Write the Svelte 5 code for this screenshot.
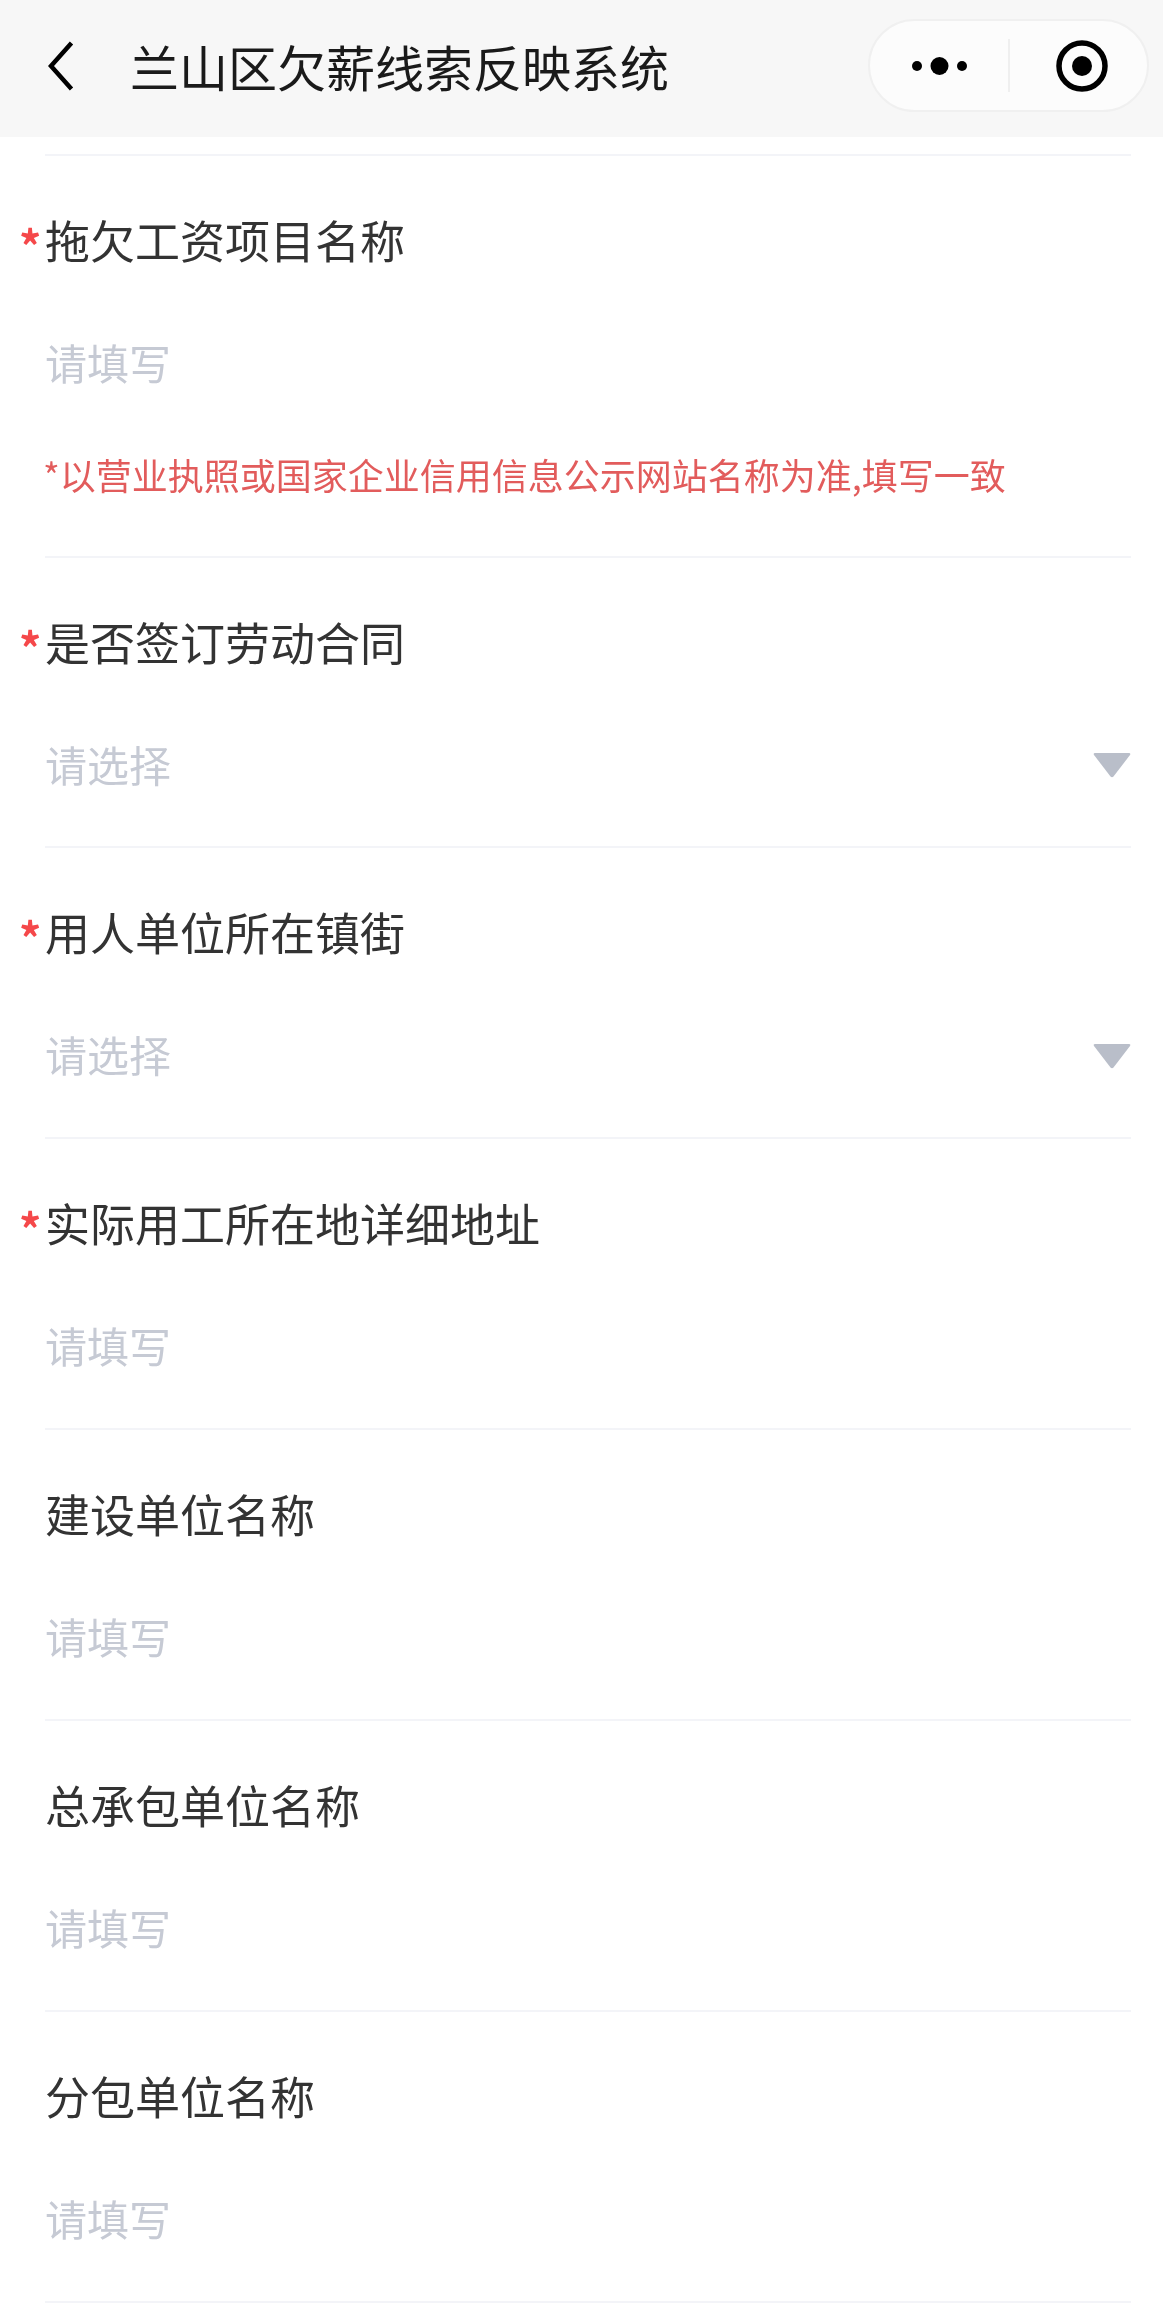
<script>
  // Form rows in display order
  const fields = [
    { label: '拖欠工资项目名称', required: true, placeholder: '请填写', hint: '*以营业执照或国家企业信用信息公示网站名称为准,填写一致' },
    { label: '是否签订劳动合同', required: true, placeholder: '请选择', select: true },
    { label: '用人单位所在镇街', required: true, placeholder: '请选择', select: true },
    { label: '实际用工所在地详细地址', required: true, placeholder: '请填写' },
    { label: '建设单位名称', placeholder: '请填写' },
    { label: '总承包单位名称', placeholder: '请填写' },
    { label: '分包单位名称', placeholder: '请填写' }
  ];
</script>

<div class="page">
  <header class="navbar">
    <svg class="back" width="26" height="50" viewBox="0 0 26 50" aria-hidden="true">
      <path d="M23.5 2 L3 25 L23.5 48" fill="none" stroke="#000" stroke-width="4.5" />
    </svg>
    <h1 class="title">兰山区欠薪线索反映系统</h1>
    <div class="capsule">
      <div class="capsule-part more">
        <svg width="56" height="20" viewBox="0 0 56 20" aria-hidden="true">
          <circle cx="6" cy="10" r="5" />
          <circle cx="28.5" cy="10" r="9" />
          <circle cx="51" cy="10" r="5" />
        </svg>
      </div>
      <div class="capsule-part close">
        <svg width="54" height="54" viewBox="0 0 54 54" aria-hidden="true">
          <circle cx="27" cy="27" r="23" fill="none" stroke="#000" stroke-width="5.5" />
          <circle cx="27" cy="27" r="10" />
        </svg>
      </div>
    </div>
  </header>

  <main class="form">
    <div class="top-rule"></div>
    {#each fields as field}
      <section class="field" class:has-hint={field.hint}>
        <div class="label">
          {#if field.required}<span class="star">*</span>{/if}{field.label}
        </div>
        <div class="control">
          <span class="placeholder">{field.placeholder}</span>
          {#if field.select}
            <svg class="arrow" width="38" height="26" viewBox="0 0 38 26" aria-hidden="true">
              <path d="M2 1 H36 Q38 1 37 3 L20.5 24.5 Q19 26 17.5 24.5 L1 3 Q0 1 2 1 Z" fill="#b9bec9" />
            </svg>
          {/if}
        </div>
        {#if field.hint}
          <p class="hint">{field.hint}</p>
        {/if}
      </section>
    {/each}
  </main>
</div>

<style>
  :global(body) {
    background: #fff;
    font-family: "Noto Sans CJK SC", "Noto Sans", sans-serif;
  }

  /* the reference is an upscaled capture, everything in it is a little soft */
  .page {
    filter: blur(0.6px);
  }

  .navbar {
    display: flex;
    align-items: center;
    height: 137px;
    padding: 0 14px 6px 48px;
    box-sizing: border-box;
    background: #f7f7f7;
  }

  .back {
    flex: none;
    margin-right: 56px;
  }

  .title {
    flex: 1;
    margin: 0;
    font-size: 49px;
    line-height: 60px;
    font-weight: 400;
    color: #1a1a1a;
  }

  .capsule {
    display: flex;
    width: 281px;
    height: 93px;
    box-sizing: border-box;
    border: 2px solid #f0f0f0;
    border-radius: 47px;
    background: #fcfcfc;
  }

  .capsule-part {
    display: flex;
    align-items: center;
    justify-content: center;
    position: relative;
    box-sizing: border-box;
  }

  .more {
    width: 140px;
    padding-right: 2px;
  }

  .close {
    flex: 1;
    padding-left: 7px;
  }

  .more::after {
    content: "";
    position: absolute;
    right: 0;
    top: 18px;
    bottom: 18px;
    width: 2px;
    background: #efefef;
  }

  .form {
    padding: 0 32px 0 45px;
  }

  .top-rule {
    height: 19px;
    border-bottom: 2px solid #f3f4f8;
    box-sizing: border-box;
  }

  .field {
    height: 290.9px;
    box-sizing: border-box;
    padding-top: 59px;
    border-bottom: 2px solid #f3f4f8;
  }

  .field.has-hint {
    height: 401.5px;
  }

  .label {
    position: relative;
    height: 50px;
    font-size: 45px;
    line-height: 50px;
    color: #333;
  }

  .star {
    position: absolute;
    left: -26px;
    top: 4px;
    font-size: 44px;
    font-weight: 700;
    color: #f5484a;
  }

  .control {
    display: flex;
    align-items: center;
    justify-content: space-between;
    height: 80px;
    margin-top: 57px;
  }

  .arrow {
    margin-top: 3px;
  }

  .placeholder {
    font-size: 42px;
    line-height: 50px;
    color: #c6cad4;
  }

  .hint {
    margin: 50px 0 0 -2px;
    font-size: 36px;
    line-height: 44px;
    color: #e25c5c;
    white-space: nowrap;
  }
</style>
